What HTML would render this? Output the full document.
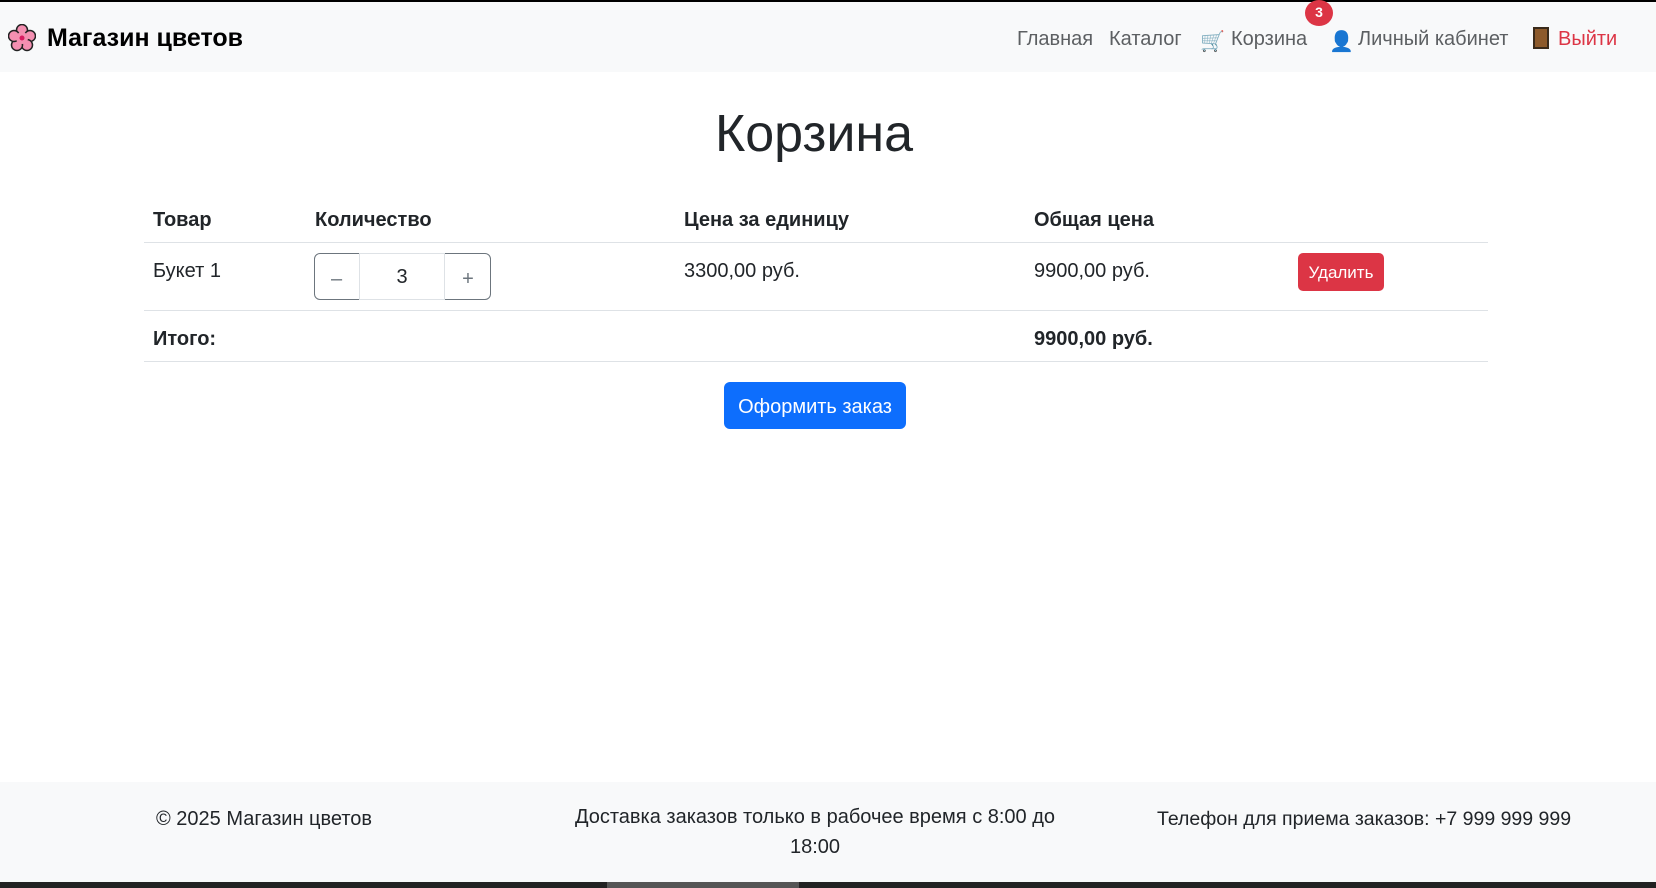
<!DOCTYPE html>
<html><head><meta charset="utf-8"><style>
*{box-sizing:border-box;margin:0;padding:0}
body{width:1656px;height:888px;position:relative;background:#fff;font-family:"Liberation Sans","DejaVu Sans",sans-serif;color:#212529;font-size:20px;overflow:hidden}
.a{position:absolute;white-space:nowrap}
.nav{position:absolute;left:0;top:0;width:1656px;height:72px;background:#f8f9fa;border-top:2px solid #000}
.nl{color:#5c5f62;top:28px;font-size:20px}
.th{font-weight:bold;top:209px}
.line{position:absolute;left:144px;width:1344px;height:1px;background:#dee2e6}
</style></head><body>
<div class="nav"></div>
<svg class="a" style="left:8px;top:24px" width="28" height="28" viewBox="0 0 28 28">
<g fill="#f48fb1" stroke="#222" stroke-width="1.5">
<circle cx="14" cy="6" r="5.5"/><circle cx="22" cy="12" r="5.5"/><circle cx="19" cy="21" r="5.5"/><circle cx="9" cy="21" r="5.5"/><circle cx="6" cy="12" r="5.5"/></g>
<circle cx="14" cy="14" r="6" fill="#f48fb1"/><circle cx="14" cy="14" r="2.5" fill="#d81b60"/></svg>
<div class="a" style="left:47px;top:24px;font-size:25px;font-weight:bold;color:#000">Магазин цветов</div>
<div class="a nl" style="left:1017px">Главная</div>
<div class="a nl" style="left:1109px">Каталог</div>
<div class="a" style="left:1200px;top:29px;font-size:20px;color:#666">🛒</div>
<div class="a nl" style="left:1231px">Корзина</div>
<div class="a" style="left:1305px;top:0;width:28px;height:26px;border-radius:50%;background:#dc3545;color:#fff;font-size:14px;font-weight:bold;text-align:center;line-height:24px">3</div>
<div class="a" style="left:1329px;top:29px;font-size:20px;color:#777">👤</div>
<div class="a nl" style="left:1358px">Личный кабинет</div>
<div class="a" style="left:1533px;top:27px;width:16px;height:22px;background:#8d5a2b;border:2px solid #3a2a1a"></div>
<div class="a nl" style="left:1558px;color:#dc3545">Выйти</div>

<div class="a" style="left:0;width:1628px;text-align:center;top:104px;font-size:52px;font-weight:500">Корзина</div>

<div class="a th" style="left:153px">Товар</div>
<div class="a th" style="left:315px">Количество</div>
<div class="a th" style="left:684px">Цена за единицу</div>
<div class="a th" style="left:1034px">Общая цена</div>
<div class="line" style="top:242px"></div>
<div class="a" style="left:153px;top:260px">Букет 1</div>
<div class="a" style="left:314px;top:253px;width:177px;height:47px;border:1px solid #6c757d;border-radius:6px"></div>
<div class="a" style="left:359px;top:253px;width:86px;height:47px;border:1px solid #dee2e6;background:#fff;text-align:center;line-height:47px">3</div>
<div class="a" style="left:314px;top:268px;width:45px;text-align:center;color:#6c757d">–</div>
<div class="a" style="left:445px;top:268px;width:46px;text-align:center;color:#6c757d">+</div>
<div class="a" style="left:684px;top:260px">3300,00 руб.</div>
<div class="a" style="left:1034px;top:260px">9900,00 руб.</div>
<div class="a" style="left:1298px;top:253px;width:86px;height:38px;background:#dc3545;border-radius:5px;color:#fff;font-size:17px;text-align:center;line-height:40px">Удалить</div>
<div class="line" style="top:310px"></div>
<div class="a th" style="left:153px;top:328px">Итого:</div>
<div class="a th" style="left:1034px;top:328px">9900,00 руб.</div>
<div class="line" style="top:361px"></div>
<div class="a" style="left:724px;top:382px;width:182px;height:47px;background:#0d6efd;border-radius:6px;color:#fff;text-align:center;line-height:50px">Оформить заказ</div>

<div class="a" style="left:0;top:782px;width:1656px;height:100px;background:#f8f9fa"></div>
<div class="a" style="left:0;top:882px;width:1656px;height:6px;background:#222"></div>
<div class="a" style="left:607px;top:882px;width:192px;height:6px;background:#555"></div>
<div class="a" style="left:156px;top:808px">© 2025 Магазин цветов</div>
<div class="a" style="left:560px;top:802px;width:510px;text-align:center;white-space:normal;line-height:30px">Доставка заказов только в рабочее время с 8:00 до 18:00</div>
<div class="a" style="left:1157px;top:808px;font-size:19.5px">Телефон для приема заказов: +7 999 999 999</div>
</body></html>
